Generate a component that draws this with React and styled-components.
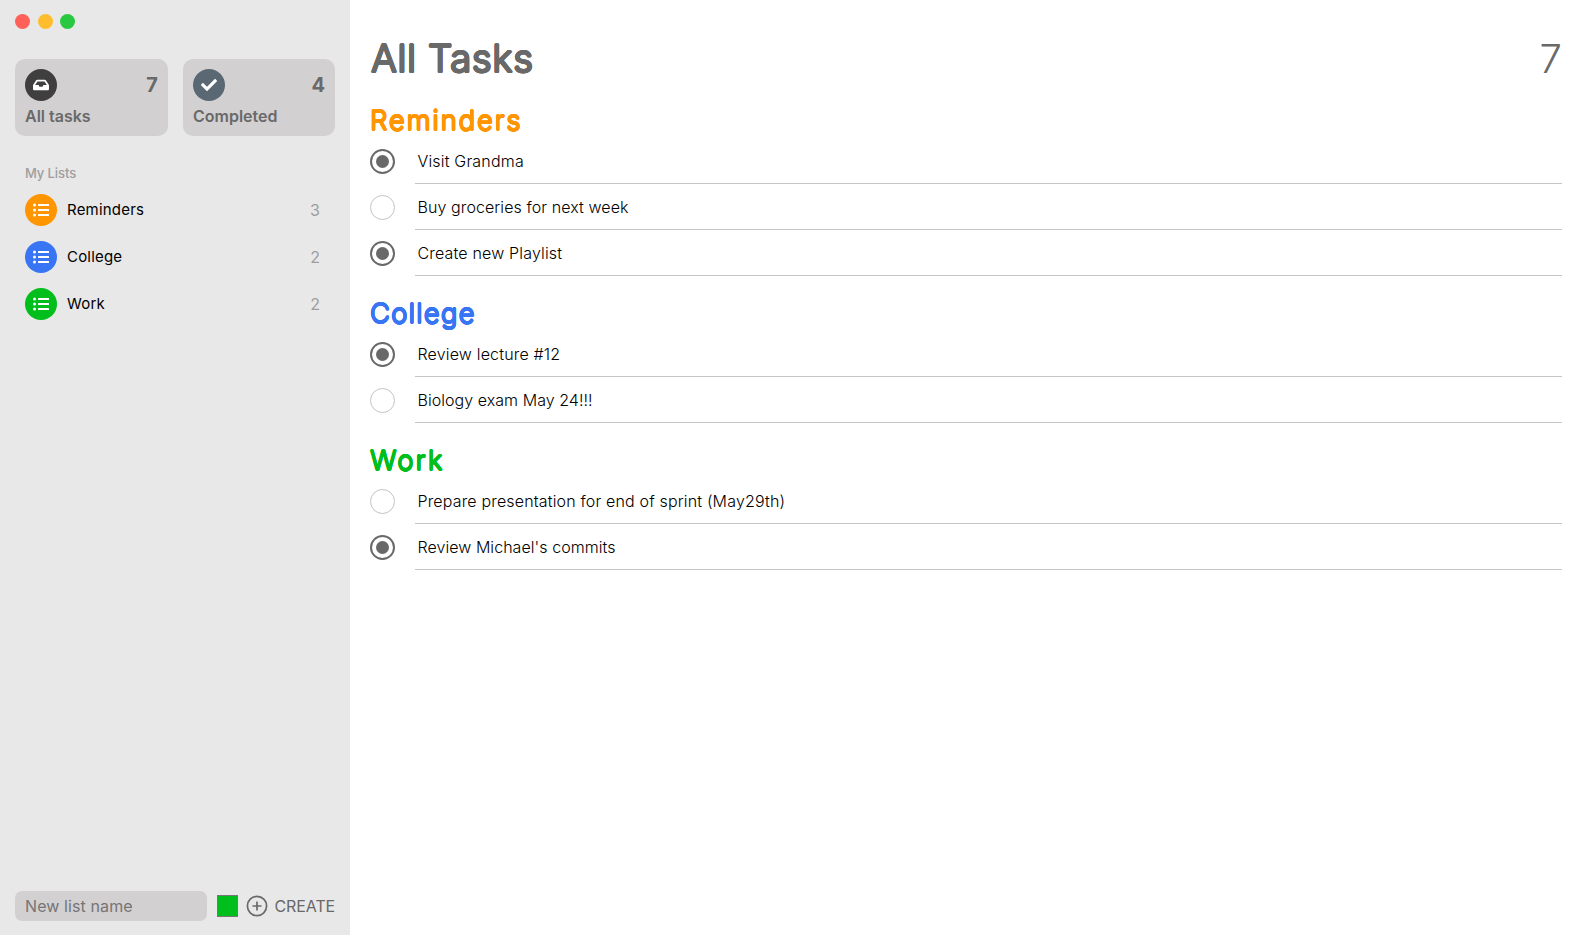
import React from 'react';
import styled, { createGlobalStyle, css } from 'styled-components';
import { FaCheck, FaInbox, FaListUl } from 'react-icons/fa';

const GlobalStyle = createGlobalStyle`
  * { box-sizing: border-box; }
  body { margin: 0; background: #fff; font-family: Inter, "Liberation Sans", sans-serif; }
  h1, h2, p { margin: 0; }
`;

// Thickens a light face evenly so that the stroke ends come out rounded.
const rounded = (r) => css`
  text-shadow: ${Array.from({ length: 12 }, (_, i) => {
    const a = (i * Math.PI) / 6;
    return `${(r * Math.cos(a)).toFixed(2)}px ${(r * Math.sin(a)).toFixed(2)}px 0 currentColor`;
  }).join(', ')};
`;

const Window = styled.div`
  display: grid;
  grid-template-columns: 350px 1fr;
  height: 100vh;
  overflow: hidden;
`;

const Sidebar = styled.aside`
  display: flex;
  flex-direction: column;
  padding: 14px 15px;
  background: #e8e8e8;
`;

const Lights = styled.div`
  display: flex;
  gap: 7.5px;
  height: 15px;
`;

const Light = styled.span`
  width: 15px;
  height: 15px;
  border-radius: 50%;
  background: ${(p) => p.$color};
`;

const Cards = styled.div`
  display: grid;
  grid-template-columns: 153px 152px;
  gap: 15px;
  margin-top: 30px;
`;

const Card = styled.div`
  display: flex;
  flex-direction: column;
  height: 77px;
  padding: 10px;
  border-radius: 10px;
  background: #d3d0d1;
  color: #696969;
`;

const CardTop = styled.div`
  display: flex;
  align-items: center;
  justify-content: space-between;
`;

const CardCount = styled.span`
  font-size: 20px;
  font-weight: 700;
  line-height: 24px;
`;

const CardLabel = styled.span`
  margin-top: 5px;
  font-size: 16px;
  font-weight: 600;
  line-height: 20px;
`;

const Badge = styled.span`
  display: flex;
  flex: none;
  align-items: center;
  justify-content: center;
  width: 32px;
  height: 32px;
  border-radius: 50%;
  background: ${(p) => p.$color};
  color: #fff;
  font-size: 16px;
`;

const ListsTitle = styled.p`
  margin: 28px 0 0 10px;
  color: #9f9d9e;
  font-size: 13px;
  font-weight: 500;
  letter-spacing: -0.1px;
  line-height: 18px;
`;

const Lists = styled.div`
  display: flex;
  flex-direction: column;
  gap: 15px;
  margin-top: 12px;
  padding: 0 15px 0 10px;
`;

const ListRow = styled.div`
  display: flex;
  align-items: center;
  gap: 10px;
  height: 32px;
`;

const ListName = styled.span`
  flex: 1;
  margin-top: -1px;
  font-size: 15px;
  font-weight: 400;
  letter-spacing: 0.2px;
  color: #000;
`;

const ListCount = styled.span`
  font-size: 16px;
  color: #9f9d9e;
`;

const CreateBar = styled.form`
  display: flex;
  align-items: center;
  height: 30px;
  margin-top: auto;
`;

const NameInput = styled.input`
  flex: none;
  width: 192px;
  height: 30px;
  padding: 0 10px;
  border: 0;
  border-radius: 7px;
  background: #d3d0d1;
  font: 400 16px Inter, sans-serif;
  letter-spacing: 0.1px;
  &::placeholder { color: #757575; opacity: 1; }
`;

const Swatch = styled.span`
  flex: none;
  width: 21px;
  height: 22px;
  margin-left: 10px;
  border: 1px solid #777;
  background: #00be1c;
`;

const CreateButton = styled.button`
  display: flex;
  flex: none;
  align-items: center;
  gap: 6.5px;
  margin-left: 8px;
  padding: 0;
  border: 0;
  background: none;
  color: #696969;
  font: 400 16px Inter, sans-serif;
  letter-spacing: -0.1px;
  white-space: nowrap;
`;

const Main = styled.main`
  padding: 34px 20px;
`;

const Header = styled.header`
  display: flex;
  align-items: center;
  justify-content: space-between;
  height: 50px;
  color: #696969;
`;

const Title = styled.h1`
  padding: 0 0 2px 1px;
  font-size: 38.5px;
  font-weight: 300;
  letter-spacing: 0.55px;
  line-height: 48px;
  ${rounded(1)}
`;

const Total = styled.span`
  font-size: 40px;
  font-weight: 300;
  line-height: 50px;
`;

const Sections = styled.div`
  margin-top: 17px;
`;

const Section = styled.section`
  & + & { margin-top: 17px; }
`;

const Heading = styled.h2`
  height: 38px;
  color: ${(p) => p.$color};
  font-size: 27.5px;
  font-weight: 300;
  letter-spacing: ${(p) => p.$tracking}px;
  line-height: 38px;
  ${rounded(0.65)}
`;

const Task = styled.div`
  display: grid;
  grid-template-columns: 25px 1fr;
  align-items: start;
  column-gap: 20px;
  height: 46px;
`;

const Radio = styled.span`
  display: flex;
  align-items: center;
  justify-content: center;
  width: 25px;
  height: 25px;
  margin-top: 10px;
  border: ${(p) => (p.$on ? '2px solid #696969' : '1px solid #c4c4c4')};
  border-radius: 50%;
  &::after {
    content: '';
    width: 13px;
    height: 13px;
    border-radius: 50%;
    background: ${(p) => (p.$on ? '#696969' : 'transparent')};
  }
`;

const TaskText = styled.span`
  height: 45px;
  padding-left: 2.5px;
  border-bottom: 1px solid #c4c4c4;
  color: #000;
  font-size: 16px;
  font-weight: 300;
  letter-spacing: ${(p) => p.$tracking}px;
  line-height: 45px;
`;

const PlusCircle = () => (
  <svg width="22" height="22" viewBox="0 0 22 22" fill="none" stroke="currentColor" strokeWidth="1.7">
    <circle cx="11" cy="11" r="9.6" />
    <path d="M11 6.5v9M6.5 11h9" />
  </svg>
);

const groups = [
  {
    name: 'Reminders',
    color: '#ff9501',
    tracking: 1.8,
    tasks: [
      { text: 'Visit Grandma', done: true, tracking: 0.18 },
      { text: 'Buy groceries for next week', done: false, tracking: 0.09 },
      { text: 'Create new Playlist', done: true, tracking: 0.17 },
    ],
  },
  {
    name: 'College',
    color: '#3875f4',
    tracking: 1.15,
    tasks: [
      { text: 'Review lecture #12', done: true, tracking: 0.17 },
      { text: 'Biology exam May 24!!!', done: false, tracking: 0.05 },
    ],
  },
  {
    name: 'Work',
    color: '#00be1c',
    tracking: 2.1,
    tasks: [
      { text: 'Prepare presentation for end of sprint (May29th)', done: false, tracking: 0.165 },
      { text: "Review Michael's commits", done: true, tracking: 0.05 },
    ],
  },
];

export default function App() {
  return (
    <Window>
      <GlobalStyle />
      <Sidebar>
        <Lights>
          <Light $color="#ff6159" />
          <Light $color="#ffbd2e" />
          <Light $color="#28c941" />
        </Lights>
        <Cards>
          <Card>
            <CardTop><Badge $color="#3f3f3f"><FaInbox /></Badge><CardCount>7</CardCount></CardTop>
            <CardLabel>All tasks</CardLabel>
          </Card>
          <Card>
            <CardTop><Badge $color="#596872"><FaCheck /></Badge><CardCount>4</CardCount></CardTop>
            <CardLabel>Completed</CardLabel>
          </Card>
        </Cards>
        <ListsTitle>My Lists</ListsTitle>
        <Lists>
          {groups.map((g) => (
            <ListRow key={g.name}>
              <Badge $color={g.color}><FaListUl /></Badge>
              <ListName>{g.name}</ListName>
              <ListCount>{g.tasks.length}</ListCount>
            </ListRow>
          ))}
        </Lists>
        <CreateBar>
          <NameInput placeholder="New list name" />
          <Swatch />
          <CreateButton type="button"><PlusCircle />CREATE</CreateButton>
        </CreateBar>
      </Sidebar>
      <Main>
        <Header><Title>All Tasks</Title><Total>7</Total></Header>
        <Sections>
          {groups.map((g) => (
            <Section key={g.name}>
              <Heading $color={g.color} $tracking={g.tracking}>{g.name}</Heading>
              {g.tasks.map((t) => (
                <Task key={t.text}>
                  <Radio $on={t.done} />
                  <TaskText $tracking={t.tracking}>{t.text}</TaskText>
                </Task>
              ))}
            </Section>
          ))}
        </Sections>
      </Main>
    </Window>
  );
}
